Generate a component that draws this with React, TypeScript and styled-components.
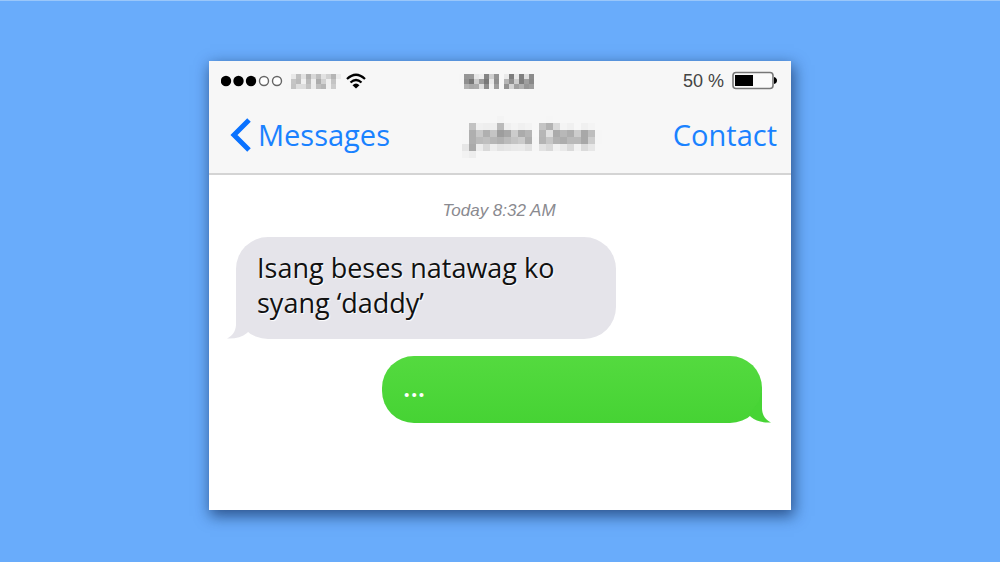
import React from "react";
import styled, { createGlobalStyle } from "styled-components";

const GlobalStyle = createGlobalStyle`
  *, *::before, *::after { box-sizing: border-box; }
  body {
    margin: 0;
    background: #69acfb;
    font-family: "Open Sans", "Noto Sans", sans-serif;
    color: #111;
  }
`;

const Page = styled.main`
  display: flex;
  justify-content: center;
  align-items: flex-start;
  min-height: 100vh;
  padding: 60px 16px 48px;
  border-top: 1px solid #9ac7fa;
`;

const Phone = styled.article`
  flex: 1;
  max-width: 582px;
  padding-bottom: 87px;
  background: #fff;
  box-shadow: 2px 5px 14px 1px rgba(10, 35, 80, 0.65);
`;

const Header = styled.header`
  background: #f7f7f7;
  border-bottom: 2px solid #d4d4d4;
  padding: 8px 14px 18px 12px;
`;

const StatusRow = styled.div`
  display: grid;
  grid-template-columns: 1fr auto 1fr;
  align-items: center;
  height: 24px;
  font-size: 18px;
  line-height: 24px;
`;

const NavRow = styled.div`
  display: flex;
  justify-content: space-between;
  align-items: center;
  height: 40px;
  margin-top: 22px;
`;

const Side = styled.div<{ $end?: boolean }>`
  display: flex;
  align-items: center;
  justify-content: ${(p) => (p.$end ? "flex-end" : "flex-start")};
  gap: 8px;
`;

const Battery = styled.span`
  font-family: "Liberation Sans", sans-serif;
  color: #444;
`;

const Hidden = styled.span<{ $mosaic: string; $size: number; $color: string }>`
  font-size: ${(p) => p.$size}px;
  font-weight: bold;
  color: ${(p) => p.$color};
  filter: url(#${(p) => p.$mosaic});
  white-space: nowrap;
`;

const NavButton = styled.button`
  display: flex;
  align-items: center;
  gap: 7px;
  margin: 0;
  padding: 0;
  border: 0;
  background: none;
  color: #1a82ff;
  font: 29px/36px "Open Sans", "Noto Sans", sans-serif;
  cursor: pointer;
`;

const BackButton = styled(NavButton)`
  padding-left: 9px;
`;

const Thread = styled.section`
  display: flex;
  flex-direction: column;
  padding: 27px 29px 0 27px;
`;

const Stamp = styled.time`
  align-self: center;
  font: italic 17px/18px "Liberation Sans", sans-serif;
  color: #8a8a90;
`;

const Bubble = styled.div<{ $mine?: boolean }>`
  position: relative;
  align-self: ${(p) => (p.$mine ? "flex-end" : "flex-start")};
  width: 380px;
  max-width: 100%;
  margin-top: 17px;
  padding: 13px 21px 19px;
  border-radius: 32px;
  background: ${(p) => (p.$mine ? "linear-gradient(#54da3f, #46d334)" : "#e5e4ea")};
  color: ${(p) => (p.$mine ? "#fff" : "#111")};
  font-size: 27px;
  font-weight: ${(p) => (p.$mine ? 600 : 400)};
  line-height: 35px;
  text-shadow: ${(p) => (p.$mine ? "none" : "1px 1px 1px #fff")};
`;

const Tail = styled.svg<{ $mine?: boolean }>`
  position: absolute;
  bottom: 0;
  ${(p) => (p.$mine ? "right: -9px; transform: scaleX(-1);" : "left: -9px;")}
  fill: ${(p) => (p.$mine ? "#47d435" : "#e5e4ea")};
`;

const Text = styled.p`
  margin: 0;
`;

const Defs = styled.svg`
  position: absolute;
`;

function Mosaic({ id, cell, blur }: { id: string; cell: number; blur: number }) {
  const mid = (cell - 1) / 2;
  return (
    <filter id={id} x="-10%" y="-10%" width="120%" height="120%" colorInterpolationFilters="sRGB">
      <feGaussianBlur in="SourceGraphic" stdDeviation={blur} result="soft" />
      <feFlood x={mid} y={mid} width="1" height="1" floodColor="#000" result="dot" />
      <feOffset in="dot" dx="0" dy="0" x="0" y="0" width={cell} height={cell} />
      <feTile result="grid" />
      <feComposite in="soft" in2="grid" operator="in" />
      <feMorphology operator="dilate" radius={mid} />
    </filter>
  );
}

function BubbleTail({ mine }: { mine?: boolean }) {
  return (
    <Tail $mine={mine} width="30" height="36" viewBox="0 0 30 36" aria-hidden="true">
      <path d="M9 2V22C8.500 29 5 33 0 35.500C8 36 15 34 20 30L22 28L12 14Z" />
    </Tail>
  );
}

export default function App() {
  return (
    <>
      <GlobalStyle />
      <Defs width="0" height="0" aria-hidden="true">
        <Mosaic id="mosaic-small" cell={5} blur={1.5} />
        <Mosaic id="mosaic-large" cell={7} blur={2.5} />
      </Defs>
      <Page>
        <Phone>
          <Header>
            <StatusRow>
              <Side>
                <svg width="62" height="12" viewBox="0 0 62 12" aria-label="Signal">
                  <circle cx="5" cy="6" r="5.200" />
                  <circle cx="17.500" cy="6" r="5.200" />
                  <circle cx="30" cy="6" r="5.200" />
                  <circle cx="43" cy="6" r="4.500" fill="#fff" stroke="#666" strokeWidth="1.400" />
                  <circle cx="56" cy="6" r="4.500" fill="#fff" stroke="#666" strokeWidth="1.400" />
                </svg>
                <Hidden $mosaic="mosaic-small" $size={18} $color="#999">AT&amp;T</Hidden>
                <svg width="20" height="16" viewBox="0 0 20 16" aria-label="Wi-Fi">
                  <g fill="none" stroke="#000" strokeWidth="2.200">
                    <path d="M1 6Q10 -2.500 19 6" />
                    <path d="M4.500 9.500Q10 4.500 15.500 9.500" />
                  </g>
                  <path d="M6.500 12.200Q10 9 13.500 12.200L10 15.500Z" />
                </svg>
              </Side>
              <Hidden $mosaic="mosaic-small" $size={18} $color="#444">9:41 AM</Hidden>
              <Side $end>
                <Battery>50 %</Battery>
                <svg width="45" height="20" viewBox="0 0 45 20" aria-label="Battery">
                  <rect x="1" y="1.500" width="40" height="16" rx="3" fill="#fafafa" stroke="#777" strokeWidth="1.600" />
                  <rect x="3" y="4" width="18" height="11" />
                  <path d="M42 6Q45 7 45 9.500T42 13Z" />
                </svg>
              </Side>
            </StatusRow>
            <NavRow>
              <BackButton type="button">
                <svg width="21" height="34" viewBox="0 0 21 34" fill="none" stroke="#0a72ff" strokeWidth="5" aria-hidden="true">
                  <path d="M19 2L4 17L19 32" />
                </svg>
                Messages
              </BackButton>
              <Hidden $mosaic="mosaic-large" $size={28} $color="#777">John Doe</Hidden>
              <NavButton type="button">Contact</NavButton>
            </NavRow>
          </Header>
          <Thread>
            <Stamp>Today 8:32 AM</Stamp>
            <Bubble>
              <BubbleTail />
              <Text>Isang beses natawag ko syang ‘daddy’</Text>
            </Bubble>
            <Bubble $mine>
              <BubbleTail mine />
              <Text>...</Text>
            </Bubble>
          </Thread>
        </Phone>
      </Page>
    </>
  );
}
